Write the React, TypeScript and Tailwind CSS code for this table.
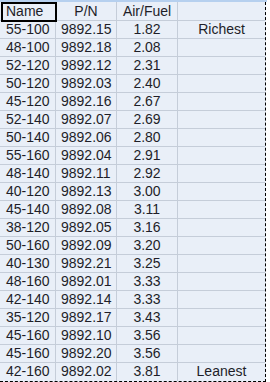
import React from "react";

const rows = [
  ["55-100", "9892.15", "1.82", "Richest"],
  ["48-100", "9892.18", "2.08", ""],
  ["52-120", "9892.12", "2.31", ""],
  ["50-120", "9892.03", "2.40", ""],
  ["45-120", "9892.16", "2.67", ""],
  ["52-140", "9892.07", "2.69", ""],
  ["50-140", "9892.06", "2.80", ""],
  ["55-160", "9892.04", "2.91", ""],
  ["48-140", "9892.11", "2.92", ""],
  ["40-120", "9892.13", "3.00", ""],
  ["45-140", "9892.08", "3.11", ""],
  ["38-120", "9892.05", "3.16", ""],
  ["50-160", "9892.09", "3.20", ""],
  ["40-130", "9892.21", "3.25", ""],
  ["48-160", "9892.01", "3.33", ""],
  ["42-140", "9892.14", "3.33", ""],
  ["35-120", "9892.17", "3.43", ""],
  ["45-160", "9892.10", "3.56", ""],
  ["45-160", "9892.20", "3.56", ""],
  ["42-160", "9892.02", "3.81", "Leanest"],
];

export default function App() {
  return (
    <div className="w-[270px] h-[382px] bg-white overflow-hidden font-['Liberation_Sans',Arial,sans-serif] text-[14px] text-[#1e1e28]">
      <div className="h-[2px] w-[267px] bg-[#b6d0ef]" />
      <div className="w-[266px] bg-[#e9eff8] border-r border-b border-dashed border-black">
        {/* header */}
        <div className="flex h-[19px] border-b border-[#c5cdd9] leading-[18px]">
          <div className="relative w-[56px] pl-[6px] border-r border-[#c5cdd9]">
            Name
            <div className="absolute left-[1px] top-0 w-[56px] h-[20px] border-2 border-black pointer-events-none" />
          </div>
          <div className="w-[61px] text-center border-r border-[#c5cdd9]">P/N</div>
          <div className="w-[61px] text-center border-r border-[#c5cdd9]">Air/Fuel</div>
          <div className="flex-1" />
        </div>
        {rows.map((r, i) => (
          <div
            key={i}
            className={`flex h-[18px] leading-[17px] ${i < rows.length - 1 ? "border-b border-[#c5cdd9]" : ""}`}
          >
            <div className="w-[56px] pl-[6px] border-r border-[#c5cdd9]">{r[0]}</div>
            <div className="w-[61px] pl-[5px] border-r border-[#c5cdd9]">{r[1]}</div>
            <div className="w-[61px] text-center border-r border-[#c5cdd9]">{r[2]}</div>
            <div className="flex-1 text-center">{r[3]}</div>
          </div>
        ))}
      </div>
    </div>
  );
}
